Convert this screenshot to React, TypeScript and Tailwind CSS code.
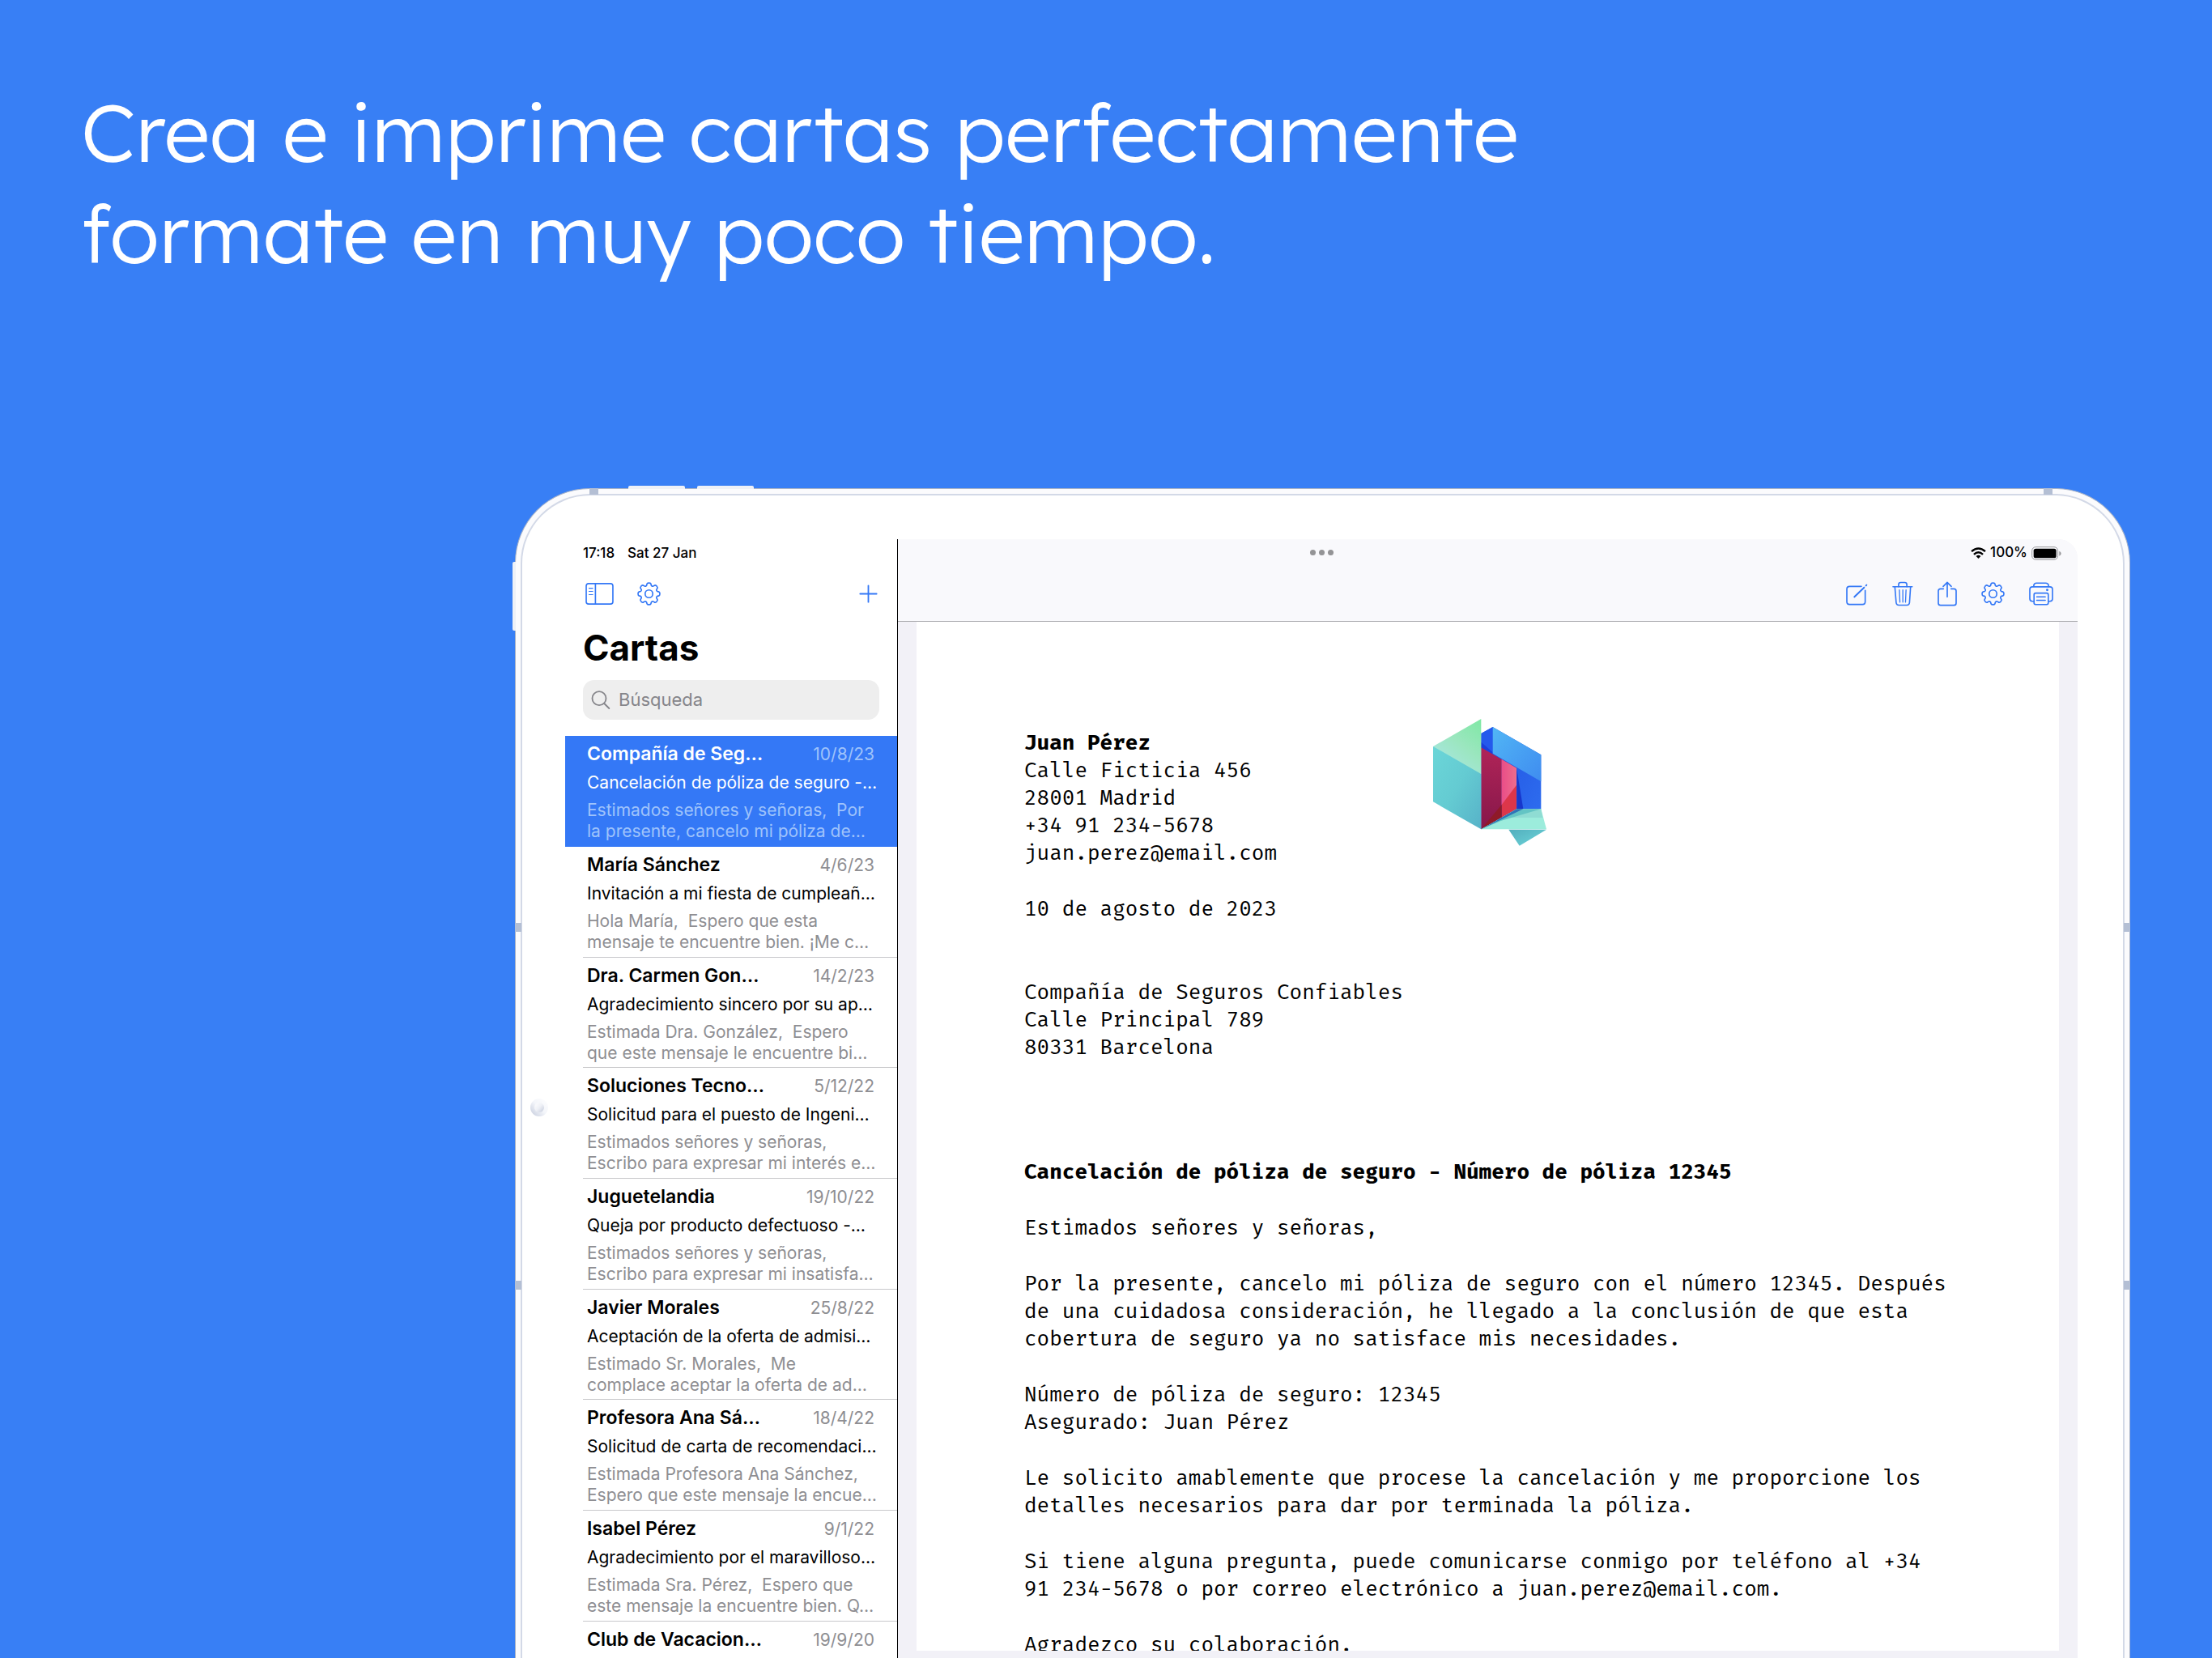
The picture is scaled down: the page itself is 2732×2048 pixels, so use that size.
import React from "react";

const BLUE = "#3478f6";

type Letter = {
  name: string;
  date: string;
  subject?: string;
  preview?: [string, string];
};

const letters: Letter[] = [
  { name: "Compañía de Seg…", date: "10/8/23", subject: "Cancelación de póliza de seguro -…", preview: ["Estimados señores y señoras,\u00a0 Por", "la presente, cancelo mi póliza de…"] },
  { name: "María Sánchez", date: "4/6/23", subject: "Invitación a mi fiesta de cumpleañ…", preview: ["Hola María,\u00a0 Espero que esta", "mensaje te encuentre bien. ¡Me c…"] },
  { name: "Dra. Carmen Gon…", date: "14/2/23", subject: "Agradecimiento sincero por su ap…", preview: ["Estimada Dra. González,\u00a0 Espero", "que este mensaje le encuentre bi…"] },
  { name: "Soluciones Tecno…", date: "5/12/22", subject: "Solicitud para el puesto de Ingeni…", preview: ["Estimados señores y señoras,", "Escribo para expresar mi interés e…"] },
  { name: "Juguetelandia", date: "19/10/22", subject: "Queja por producto defectuoso -…", preview: ["Estimados señores y señoras,", "Escribo para expresar mi insatisfa…"] },
  { name: "Javier Morales", date: "25/8/22", subject: "Aceptación de la oferta de admisi…", preview: ["Estimado Sr. Morales,\u00a0 Me", "complace aceptar la oferta de ad…"] },
  { name: "Profesora Ana Sá…", date: "18/4/22", subject: "Solicitud de carta de recomendaci…", preview: ["Estimada Profesora Ana Sánchez,", "Espero que este mensaje la encue…"] },
  { name: "Isabel Pérez", date: "9/1/22", subject: "Agradecimiento por el maravilloso…", preview: ["Estimada Sra. Pérez,\u00a0 Espero que", "este mensaje la encuentre bien. Q…"] },
  { name: "Club de Vacacion…", date: "19/9/20" },
];

const paragraphs: string[][] = [
  ["Estimados señores y señoras,"],
  [
    "Por la presente, cancelo mi póliza de seguro con el número 12345. Después",
    "de una cuidadosa consideración, he llegado a la conclusión de que esta",
    "cobertura de seguro ya no satisface mis necesidades.",
  ],
  ["Número de póliza de seguro: 12345", "Asegurado: Juan Pérez"],
  [
    "Le solicito amablemente que procese la cancelación y me proporcione los",
    "detalles necesarios para dar por terminada la póliza.",
  ],
  [
    "Si tiene alguna pregunta, puede comunicarse conmigo por teléfono al +34",
    "91 234-5678 o por correo electrónico a juan.perez@email.com.",
  ],
  ["Agradezco su colaboración."],
];

function gearPath(): string {
  const pts: [number, number][] = [];
  for (let i = 0; i < 8; i++) {
    const corners: [number, number][] = [
      [30.5, -16],
      [40.5, -10],
      [40.5, 10],
      [30.5, 16],
    ];
    for (const [r, off] of corners) {
      const a = ((i * 45 + off - 90) * Math.PI) / 180;
      pts.push([43 + r * Math.cos(a), 43 + r * Math.sin(a)]);
    }
  }
  const n = pts.length;
  let d = "";
  pts.forEach((p, i) => {
    const prev = pts[(i + n - 1) % n];
    const next = pts[(i + 1) % n];
    const t = 0.42;
    const a = [p[0] + (prev[0] - p[0]) * t, p[1] + (prev[1] - p[1]) * t];
    const b = [p[0] + (next[0] - p[0]) * t, p[1] + (next[1] - p[1]) * t];
    d += `${i === 0 ? "M" : "L"}${a[0].toFixed(1)} ${a[1].toFixed(1)}Q${p[0].toFixed(1)} ${p[1].toFixed(1)} ${b[0].toFixed(1)} ${b[1].toFixed(1)}`;
  });
  return d + "Z";
}

const GEAR = gearPath();

const line = {
  fill: "none",
  stroke: BLUE,
  strokeWidth: 5,
  strokeLinecap: "round" as const,
  strokeLinejoin: "round" as const,
};

const GearIcon = () => (
  <svg className="h-[29px] w-[29px]" viewBox="0 0 86 86" {...line}>
    <path d={GEAR} />
    <circle cx="43" cy="43" r="14" />
  </svg>
);

const SidebarIcon = () => (
  <svg className="h-[27px] w-[35px]" viewBox="309 389 105 82" {...line}>
    <rect x="311.500" y="391.500" width="100" height="77" rx="9" />
    <path d="M346 391V469" />
    <path d="M322 409H336M322 421H336M322 433H336" strokeWidth="3.500" />
  </svg>
);

const PlusIcon = () => (
  <svg className="h-[23px] w-[23px]" viewBox="0 0 69 69" {...line}>
    <path d="M34.500 4V65M4 34.500H65" strokeWidth="5.500" />
  </svg>
);

const ComposeIcon = () => (
  <svg className="h-[31px] w-[27px]" viewBox="305 384 81 93" {...line}>
    <path d="M362 403H318Q308 403 308 413V460Q308 470 318 470H366Q376 470 376 460V418" />
    <path d="M336 442L372 407" strokeWidth="6" />
    <path d="M379 400L381 398" strokeWidth="6" />
  </svg>
);

const TrashIcon = () => (
  <svg className="h-[31px] w-[26px]" viewBox="470 383 79 93" {...line}>
    <path d="M473 403H545" />
    <path d="M494 403V395Q494 387 502 387H517Q525 387 525 395V403" />
    <path d="M480 403L485 463Q486 472 495 472H525Q534 472 535 463L539 403" />
    <path d="M497 415L499 461M510 415V461M522 415L520 461" strokeWidth="4" />
  </svg>
);

const ShareIcon = () => (
  <svg className="h-[31px] w-[24px]" viewBox="638 387 72 93" {...line}>
    <path d="M660 415H649Q641 415 641 423V468Q641 476 649 476H699Q707 476 707 468V423Q707 415 699 415H688" />
    <path d="M674 445V392M659 406L674 391L689 406" />
  </svg>
);

const PrinterIcon = () => (
  <svg className="h-[31px] w-[30px]" viewBox="974 383 92 93" {...line}>
    <path d="M992 402V398Q993 389 1002 389H1037Q1047 389 1048 398V402" />
    <path d="M992 458H987Q977 458 977 448V413Q977 403 987 403H1053Q1063 403 1063 413V448Q1063 458 1053 458H1048" />
    <rect x="993" y="427" width="54" height="43" rx="6" />
    <path d="M1003 441H1036M1003 454H1036" strokeWidth="4" />
    <circle cx="1043" cy="415" r="4.500" fill={BLUE} stroke="none" />
  </svg>
);

const SearchIcon = () => (
  <svg className="h-[24px] w-[24px] shrink-0" viewBox="330 787 72 72" fill="none" stroke="#85858a" strokeWidth="5.500" strokeLinecap="round">
    <circle cx="360" cy="816" r="25.500" />
    <path d="M379 835L397 853" />
  </svg>
);

const WifiIcon = () => (
  <svg className="h-[14px] w-[19px]" viewBox="762 255 58 43" fill="none" stroke="#000" strokeWidth="7.500">
    <path d="M765 271Q791 248 817 271" />
    <path d="M774 282Q791 266 808 282" />
    <path d="M782 289Q791 281 800 289L791 298Z" fill="#000" stroke="none" />
  </svg>
);

const BatteryIcon = () => (
  <svg className="h-[17px] w-[37px]" viewBox="987 252 111 51">
    <rect x="989" y="254" width="96" height="47" rx="14" fill="none" stroke="#98989c" strokeWidth="3" />
    <rect x="995" y="260" width="84" height="35" rx="8" />
    <path d="M1090 269Q1097 272 1097 278Q1097 284 1090 287Z" fill="#98989c" />
  </svg>
);

const CompanyLogo = () => (
  <svg className="h-[157px] w-[140px]" viewBox="90 54 420 471" role="img" aria-label="Logotipo">
    <defs>
      <linearGradient id="mint" x1="1" y1="0" x2="0.300" y2="1">
        <stop offset="0" stopColor="#7fe8a4" />
        <stop offset="0.500" stopColor="#9be6bf" />
        <stop offset="1" stopColor="#a9e6e4" />
      </linearGradient>
      <linearGradient id="teal" x1="0" y1="0" x2="1" y2="1">
        <stop offset="0" stopColor="#6bd6d8" />
        <stop offset="0.500" stopColor="#64cbd2" />
        <stop offset="1" stopColor="#57b2c8" />
      </linearGradient>
      <linearGradient id="sky" x1="0" y1="0" x2="1" y2="1">
        <stop offset="0" stopColor="#51b6f5" />
        <stop offset="1" stopColor="#3f8cf0" />
      </linearGradient>
      <linearGradient id="royal" x1="0" y1="0" x2="1" y2="1">
        <stop offset="0" stopColor="#1f4fe0" />
        <stop offset="1" stopColor="#2f6ff0" />
      </linearGradient>
      <linearGradient id="wine" x1="0" y1="0" x2="0" y2="1">
        <stop offset="0" stopColor="#b02458" />
        <stop offset="1" stopColor="#86174a" />
      </linearGradient>
      <linearGradient id="pink" x1="0" y1="0" x2="1" y2="0">
        <stop offset="0" stopColor="#ea4d88" />
        <stop offset="1" stopColor="#ee6d8c" />
      </linearGradient>
      <linearGradient id="foot" x1="0" y1="0" x2="1" y2="1">
        <stop offset="0" stopColor="#52aebd" />
        <stop offset="1" stopColor="#6ed6da" />
      </linearGradient>
    </defs>
    <path d="M268 108L311 84L490 187V388H400L268 463Z" fill="url(#royal)" />
    <path d="M268 108L311 84V185L268 160Z" fill="#2459ec" />
    <path d="M268 140L311 178V190L268 162Z" fill="#1b3fdc" />
    <path d="M311 84L490 187V286L311 182Z" fill="url(#sky)" />
    <path d="M400 240L424 388H400Z" fill="#1737cc" />
    <path d="M268 160L344 204V420L268 463Z" fill="url(#wine)" />
    <path d="M344 204L399 236V388L344 420Z" fill="#dc364a" />
    <path d="M344 204L399 236V299L344 372Z" fill="url(#pink)" />
    <path d="M344 372V420L268 463Z" fill="#8f1a28" />
    <path d="M268 463L400 388H490L510 463Z" fill="#9cecdc" />
    <path d="M268 463L400 388H490L496 420H370Z" fill="#8fdcd3" />
    <path d="M268 463L400 388H490L340 432Z" fill="#63c4c4" />
    <path d="M268 463L400 388H424Z" fill="#2f74b8" />
    <path d="M370 464H510L410 524Z" fill="url(#foot)" />
    <path d="M90 156L268 54V258L180 240Z" fill="url(#mint)" />
    <path d="M90 156L268 258V463L90 361Z" fill="url(#teal)" />
  </svg>
);

function IconButton({ label, children }: { label: string; children: React.ReactNode }) {
  return (
    <button type="button" aria-label={label} className="flex items-center justify-center">
      {children}
    </button>
  );
}

function LetterRow({ letter, selected, last }: { letter: Letter; selected: boolean; last: boolean }) {
  return (
    <li className={`h-[137px] nth-[3n]:h-[136px] ${selected ? "bg-[#3478f6] text-white" : "text-black"}`}>
      <button
        type="button"
        className={`ml-[22px] flex h-full w-[calc(100%-22px)] flex-col gap-2 whitespace-nowrap pl-[5px] pr-[28px] pt-2 text-left ${
          selected || last ? "" : "border-b border-[#c8c8cb]"
        }`}
      >
        <span className="flex w-full items-center justify-between leading-[29px]">
          <span className="text-[23px] font-semibold">{letter.name}</span>
          <span className={`text-[21px] ${selected ? "text-[#9fc3fb]" : "text-[#8e8e92]"}`}>{letter.date}</span>
        </span>
        {letter.subject && <span className="text-[21px] leading-[26px]">{letter.subject}</span>}
        {letter.preview && (
          <span className={`text-[21px] leading-[26px] ${selected ? "text-[#9fc3fb]" : "text-[#8e8e92]"}`}>
            {letter.preview[0]}
            <br />
            {letter.preview[1]}
          </span>
        )}
      </button>
    </li>
  );
}

function Sidebar() {
  return (
    <aside className="flex w-[411px] shrink-0 flex-col overflow-hidden border-r border-black bg-white">
      <div className="flex h-8 shrink-0 items-center gap-4 pl-[22px] pt-[3px] text-[17px] font-medium">
        <span>17:18</span>
        <span>Sat 27 Jan</span>
      </div>
      <div className="flex h-[70px] shrink-0 items-center pl-[25px] pr-[24px]">
        <IconButton label="Barra lateral"><SidebarIcon /></IconButton>
        <span className="w-[29px]" />
        <IconButton label="Ajustes"><GearIcon /></IconButton>
        <span className="flex-1" />
        <IconButton label="Nueva carta"><PlusIcon /></IconButton>
      </div>
      <h2 className="shrink-0 pl-[22px] text-[44px] font-bold leading-[64px]">Cartas</h2>
      <label className="ml-[22px] mr-[22px] mt-2 flex h-[49px] shrink-0 items-center gap-[10px] rounded-[14px] bg-[#eeeeee] pl-[10px]">
        <SearchIcon />
        <input
          type="search"
          aria-label="Búsqueda"
          placeholder="Búsqueda"
          className="w-full min-w-0 bg-transparent text-[22px] outline-none placeholder:text-[#85858a]"
        />
      </label>
      <ul className="mt-[20px]">
        {letters.map((l, i) => (
          <LetterRow key={l.name} letter={l} selected={i === 0} last={i === letters.length - 1} />
        ))}
      </ul>
    </aside>
  );
}

function Toolbar() {
  return (
    <header className="h-[102px] shrink-0 border-b border-[#a9a9ad] bg-[#f9f9fc]">
      {/* The dots are centred on the whole screen, so this row also spans the sidebar's width. */}
      <div className="-ml-[411px] grid h-8 grid-cols-[1fr_auto_1fr] items-center">
        <span />
        <span className="flex gap-[4px]">
          <i className="h-[7px] w-[7px] rounded-full bg-[#949496]" />
          <i className="h-[7px] w-[7px] rounded-full bg-[#949496]" />
          <i className="h-[7px] w-[7px] rounded-full bg-[#949496]" />
        </span>
        <span className="flex items-center justify-end gap-[5px] pr-[20px] pt-[2px] text-[17px] font-medium">
          <WifiIcon />
          100%
          <BatteryIcon />
        </span>
      </div>
      <div className="flex h-[70px] items-center justify-end gap-[30px] pr-[30px]">
        <IconButton label="Editar"><ComposeIcon /></IconButton>
        <IconButton label="Eliminar"><TrashIcon /></IconButton>
        <IconButton label="Compartir"><ShareIcon /></IconButton>
        <IconButton label="Ajustes de la carta"><GearIcon /></IconButton>
        <IconButton label="Imprimir"><PrinterIcon /></IconButton>
      </div>
    </header>
  );
}

function LetterPage() {
  return (
    <article className="min-h-0 flex-1 overflow-hidden whitespace-pre bg-white pl-[133px] font-['Fira_Mono','DejaVu_Sans_Mono',monospace] text-[26px] leading-[34px] text-black">
      <div className="flex pt-[120px]">
        <address className="w-[505px] pt-[13px] not-italic">
          <strong className="block">Juan Pérez</strong>
          Calle Ficticia 456
          <br />
          28001 Madrid
          <br />
          +34 91 234-5678
          <br />
          juan.perez@email.com
        </address>
        <CompanyLogo />
      </div>
      <p className="mt-[35px]">10 de agosto de 2023</p>
      <p className="mt-[69px]">
        Compañía de Seguros Confiables
        <br />
        Calle Principal 789
        <br />
        80331 Barcelona
      </p>
      <h3 className="mt-[120px] font-bold">Cancelación de póliza de seguro - Número de póliza 12345</h3>
      {paragraphs.map((lines) => (
        <p key={lines[0]} className="mt-[35px]">
          {lines.join("\n")}
        </p>
      ))}
    </article>
  );
}

const BAND = "absolute bg-[#b4bfd4]";

export default function App() {
  return (
    <main className="flex h-screen flex-col overflow-hidden bg-[#387ff5] font-['Inter',sans-serif]">
      <h1 className="px-[100px] pt-[100px] font-['Lexend','Open_Sans',sans-serif] text-[100px] font-light leading-[125px] text-white">
        Crea e imprime cartas perfectamente
        <br />
        formate en muy poco tiempo.
      </h1>

      <section className="relative ml-[636px] mr-[101px] mt-[253px] min-h-0 flex-1">
        <span className="absolute left-[140px] top-[-3px] h-[4px] w-[70px] rounded-t-[2px] bg-[#eef1f7]" />
        <span className="absolute left-[225px] top-[-3px] h-[4px] w-[70px] rounded-t-[2px] bg-[#eef1f7]" />
        <span className="absolute left-[-3px] top-[91px] h-[85px] w-[4px] rounded-l-[2px] bg-[#eef1f7]" />

        <div className="flex h-full flex-col rounded-t-[92px] border-x border-t border-[#a9b3c6] bg-[#fbfbfd] px-[6px] pt-[6px]">
          <div className="flex min-h-0 flex-1 flex-col rounded-t-[86px] border-x-2 border-t-2 border-[#d3d9e7] bg-white pl-[53px] pr-[56px] pt-[54px]">
            <div className="flex min-h-0 flex-1 overflow-hidden rounded-t-[24px]">
              <Sidebar />
              <div className="flex min-w-0 flex-1 flex-col bg-[#f2f1f7]">
                <Toolbar />
                <div className="flex min-h-0 flex-1 flex-col px-[23px] pb-[9px]">
                  <LetterPage />
                </div>
              </div>
            </div>
          </div>
        </div>

        <span className={`${BAND} left-[92px] top-0 h-[8px] w-[11px]`} />
        <span className={`${BAND} right-[96px] top-0 h-[8px] w-[11px]`} />
        <span className={`${BAND} left-0 top-[537px] h-[11px] w-[8px]`} />
        <span className={`${BAND} left-0 top-[979px] h-[11px] w-[8px]`} />
        <span className={`${BAND} right-0 top-[537px] h-[11px] w-[8px]`} />
        <span className={`${BAND} right-0 top-[979px] h-[11px] w-[8px]`} />
        <span className="absolute left-[19px] top-[754px] flex h-[22px] w-[22px] items-center justify-center rounded-full bg-linear-to-bl from-white via-[#f3f5fa] to-[#c3cadb]">
          <span className="h-[12px] w-[12px] rounded-full bg-linear-to-tl from-[#c3cadb] via-[#eef0f6] to-white" />
        </span>
      </section>
    </main>
  );
}
